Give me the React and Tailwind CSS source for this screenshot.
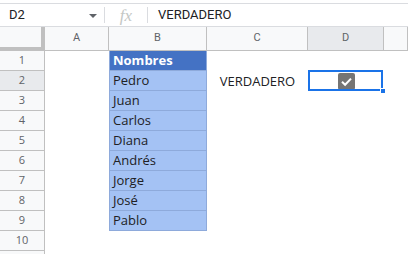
import { Fragment } from "react";

// Hoja de cálculo: columna B con nombres, C2 = VERDADERO, D2 = casilla marcada (seleccionada)
const NAMES = ["Nombres", "Pedro", "Juan", "Carlos", "Diana", "Andrés", "Jorge", "José", "Pablo"];
const ROWS = [1, 2, 3, 4, 5, 6, 7, 8, 9, 10, 11];

const SHEET_FONT = { fontFamily: "Roboto, 'Liberation Sans', sans-serif" };
const CELL_FONT = { fontFamily: "'Open Sans', 'Noto Sans', sans-serif" };

function CheckBox() {
  return (
    <svg width="17" height="17" viewBox="0 0 17 17" aria-hidden="true">
      <rect x="0" y="0" width="17" height="17" rx="2" fill="#757575" />
      <path d="M4 8.8 L7.1 11.8 L13 5.6" fill="none" stroke="#fff" strokeWidth="2" />
    </svg>
  );
}

function FormulaBar() {
  return (
    <div className="flex h-[24px] items-center border-y border-[#dadce0] bg-white text-[13px] text-[#202124]">
      <div className="flex w-[104px] items-center justify-between pl-[9px] pr-[7px]">
        <span>D2</span>
        {/* flecha del cuadro de nombres */}
        <span className="mt-[1px] h-0 w-0 border-x-[4px] border-t-[4px] border-x-transparent border-t-[#5f6368]" />
      </div>
      <div className="h-[16px] w-px bg-[#dadce0]" />
      <div className="flex w-[42px] justify-center">
        <span
          className="text-[17px] italic leading-none text-[#c4c7c5]"
          style={{ fontFamily: "'Liberation Serif', serif" }}
        >
          fx
        </span>
      </div>
      <div className="h-[16px] w-px bg-[#dadce0]" />
      <span className="pl-[10px]">VERDADERO</span>
    </div>
  );
}

function HeaderRow() {
  const colCls = "flex items-center justify-center border-r border-b border-[#c0c0c0] text-[11px] text-[#5f6368]";
  return (
    <div className="flex h-[24px]">
      <div className="h-[24px] w-[45px] shrink-0 border-r-4 border-b-4 border-[#c0c0c0] bg-[#f8f9fa]" />
      <div className={`${colCls} w-[64px] shrink-0 bg-[#f8f9fa]`}>A</div>
      <div className={`${colCls} w-[98px] shrink-0 bg-[#f8f9fa]`}>B</div>
      <div className={`${colCls} w-[101px] shrink-0 bg-[#f8f9fa]`}>C</div>
      <div className={`${colCls} w-[76px] shrink-0 bg-[#e8eaed]`}>D</div>
      <div className={`${colCls} flex-1 bg-[#f8f9fa]`} />
    </div>
  );
}

function Row({ n }) {
  const name = NAMES[n - 1];
  const isHead = n === 1;
  return (
    <div className="flex h-[20px]">
      <div
        className={`flex w-[45px] shrink-0 items-center justify-center border-r border-b border-[#c0c0c0] text-[11px] text-[#5f6368] ${
          n === 2 ? "bg-[#e8eaed]" : "bg-[#f8f9fa]"
        }`}
        style={CELL_FONT}
      >
        {n <= 10 ? n : null}
      </div>
      <div className="w-[64px] shrink-0" />
      {name ? (
        <div
          className={`flex w-[98px] shrink-0 items-end border-r border-b border-l border-[#8eaadb] pb-[1px] pl-[3px] text-[13px] leading-[17px] ${
            isHead ? "bg-[#4472c4] font-bold text-white" : "bg-[#a4c2f4] text-[#202124]"
          }`}
          style={CELL_FONT}
        >
          {name}
        </div>
      ) : (
        <div className="w-[98px] shrink-0" />
      )}
      <div
        className="flex w-[101px] shrink-0 items-end justify-center pb-[1px] text-[13px] leading-[17px] text-[#202124]"
        style={CELL_FONT}
      >
        {n === 2 ? "VERDADERO" : null}
      </div>
      <div className="relative flex w-[76px] shrink-0 items-center justify-center">
        {n === 2 && (
          <>
            <CheckBox />
            {/* selección de la celda activa */}
            <div className="pointer-events-none absolute -top-px left-0 right-[1px] bottom-0 border-2 border-[#1a73e8]" />
            <div className="absolute -bottom-[3px] right-[-2px] h-[6px] w-[6px] border border-white bg-[#1a73e8]" />
          </>
        )}
      </div>
      <div className="flex-1" />
    </div>
  );
}

export default function App() {
  return (
    <div className="h-[254px] w-[408px] overflow-hidden bg-white" style={SHEET_FONT}>
      <div className="h-[3px]" />
      <FormulaBar />
      <HeaderRow />
      {ROWS.map((n) => (
        <Fragment key={n}>
          <Row n={n} />
        </Fragment>
      ))}
    </div>
  );
}
